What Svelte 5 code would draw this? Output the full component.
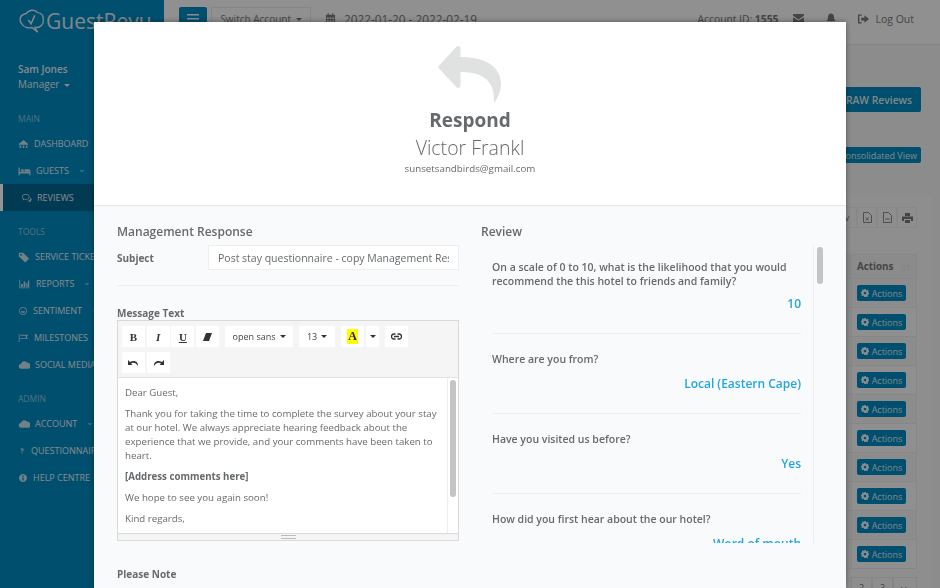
<script>
	const nav = [
		{ head: 'MAIN', items: [
			{ label: 'DASHBOARD', icon: 'bank', w: 11 },
			{ label: 'GUESTS', icon: 'bed', w: 13, more: true },
			{ label: 'REVIEWS', icon: 'chat', w: 11, active: true }
		] },
		{ head: 'TOOLS', items: [
			{ label: 'SERVICE TICKETS', icon: 'tag', w: 12 },
			{ label: 'REPORTS', icon: 'chart', w: 13, more: true },
			{ label: 'SENTIMENT', icon: 'smile', w: 10, more: true },
			{ label: 'MILESTONES', icon: 'flag', w: 11 },
			{ label: 'SOCIAL MEDIA', icon: 'cloud', w: 12 }
		] },
		{ head: 'ADMIN', items: [
			{ label: 'ACCOUNT', icon: 'cloud', w: 12, more: true },
			{ label: 'QUESTIONNAIRES', icon: 'help', w: 8 },
			{ label: 'HELP CENTRE', icon: 'info', w: 10 }
		] }
	];
	const icons = {
		bank: 'M1 7 7 2l6 5v1H1zM2 9h2v3H2zM6 9h2v3H6zM10 9h2v3h-2z',
		bed: 'M0 3h1.500v5H14v4h-1.500v-2h-11v2H0zM3 5h3v2.500H3zM7 5h5a2 2 0 0 1 2 2v.500H7z',
		chat: 'M6 2c2.800 0 5 1.600 5 3.600S8.800 9.200 6 9.200c-.6 0-1.200 0-1.700-.2L2 10.200l.6-2C1.600 7.500 1 6.600 1 5.600 1 3.600 3.200 2 6 2zm0 1C3.800 3 2 4.200 2 5.600c0 .8.600 1.500 1.700 2.100l-.2.800 1-.6c.5.200 1 .3 1.500.3 2.200 0 4-1.200 4-2.600S8.200 3 6 3zM12 6.500c1 .6 1.500 1.400 1.500 2.300 0 .8-.5 1.500-1.300 2l.4 1.500-1.900-1c-1.100.2-2.300 0-3.200-.5 2.600 0 5-1.800 4.500-4.300z',
		tag: 'M1 2h5l7 7-4.500 4.500-7.500-7zM3.500 3.500a1 1 0 1 0 .01 0z',
		chart: 'M1 2h1v9h11v1H1zM3 7h2v3.500H3zM6 4h2v6.500H6zM9 6h1.500v4.500H9zM11 3h1.500v7.500H11z',
		smile: 'M7 1.500a5.500 5.500 0 1 0 .01 0zm0 1a4.500 4.500 0 1 1-.01 0zM4 7.500h6c-.4 1.500-1.600 2.300-3 2.300S4.400 9 4 7.500z',
		flag: 'M1 2h1v10H1zM3 3h10l-2 2.500L13 8H3V7h7.500L9.500 5.500l1-1.500H3z',
		cloud: 'M4 11.500a3 3 0 0 1-.4-6 4 4 0 0 1 7.300-1 3.500 3.500 0 0 1 .1 7z',
		help: 'M4 5c0-1.700 1.300-3 3-3s3 1.200 3 2.700c0 2-2.300 2.200-2.300 3.800H6c0-2.500 2-2.600 2-3.800 0-.5-.4-.9-1-.9-.7 0-1 .5-1 1.200zM6 9.500h1.800v2H6z',
		info: 'M7 1.500a5.500 5.500 0 1 0 .01 0zM6 3.500h2v2H6zM6 6.500h2v4H6z'
	};
	const rows = Array.from({ length: 10 });
	const questions = [
		{ q: 'On a scale of 0 to 10, what is the likelihood that you would recommend the this hotel to friends and family?', a: '10' },
		{ q: 'Where are you from?', a: 'Local (Eastern Cape)' },
		{ q: 'Have you visited us before?', a: 'Yes' },
		{ q: 'How did you first hear about the our hotel?', a: 'Word of mouth' }
	];
</script>

<div class="page">
	<aside class="sidebar">
		<div class="brand">
			<svg width="28" height="28" viewBox="0 0 30 30" fill="none" stroke="#dfe8ec" stroke-width="1.500">
				<path d="M9 7c2-4 9-5 12-1 4 0 7 4 6 8 1 4-3 8-7 8l-2 0 3 5-6-5c-4 1-9 0-11-4-3-3-2-9 2-10 1-1 2-1 3-1z" />
				<path d="M11 14l3 4 4-9" stroke-width="1.700" />
			</svg>
			<span>GuestRevu</span>
		</div>
		<div class="user">
			<strong>Sam Jones</strong>
			<span>Manager <i class="caret"></i></span>
		</div>
		{#each nav as group}
			<div class="group">
				<h4>{group.head}</h4>
				{#each group.items as item}
					<div class="nav-item" class:active={item.active}>
						<svg width={item.w} height="12" viewBox="0 0 14 14" fill="currentColor"><path d={icons[item.icon]} /></svg>
						<span>{item.label}</span>
						{#if item.more}<small>⌄</small>{/if}
					</div>
				{/each}
			</div>
		{/each}
	</aside>

	<main class="main">
		<header class="topbar">
			<button class="burger" aria-label="Menu">
				<svg width="12" height="10" viewBox="0 0 12 10" fill="#eef4f7"><path d="M0 0h12v1.500H0zM0 4h12v1.500H0zM0 8h12v1.500H0z" /></svg>
			</button>
			<button class="switch">Switch Account <i class="caret"></i></button>
			<svg class="cal" width="11" height="11" viewBox="0 0 12 12" fill="#777"><path d="M1 2h2V0h1v2h4V0h1v2h2v10H1zM2 5v1.500h2V5zm3 0v1.500h2V5zm3 0v1.500h2V5zM2 8v1.500h2V8zm3 0v1.500h2V8zm3 0v1.500h2V8z" /></svg>
			<span class="dates">2022-01-20 - 2022-02-19</span>
			<span class="spacer"></span>
			<span class="account">Account ID: <b>1555</b></span>
			<svg width="11" height="9" viewBox="0 0 12 10" fill="#777"><path d="M0 0h12v2L6 6 0 2zM0 3.500 6 7.500l6-4V10H0z" /></svg>
			<svg class="bell" width="10" height="11" viewBox="0 0 12 12" fill="#777"><path d="M6 0c2.500 0 3.500 2 3.500 4 0 3 1 4 2 5H.5c1-1 2-2 2-5 0-2 1-4 3.500-4zM4.500 10h3a1.500 1.500 0 0 1-3 0z" /></svg>
			<svg class="exit" width="11" height="10" viewBox="0 0 12 10" fill="#777"><path d="M4 0v1.500H1.500v7H4V10H0V0zM7 1l5 4-5 4V6.500H3.500v-3H7z" /></svg>
			<span class="logout">Log Out</span>
		</header>

		<div class="raw-row"><button class="btn raw">RAW Reviews</button></div>
		<div class="view-row"><button class="btn view">Consolidated View</button></div>

		<section class="panel">
			<div class="tools">
				<span class="tool">v</span>
				<span class="tool"><svg width="9" height="11" viewBox="0 0 9 11" fill="none" stroke="#888"><path d="M.5.500h5l3 3v7h-8zM3 5.500l2.500 3M5.500 5.500l-2.500 3" /></svg></span>
				<span class="tool"><svg width="9" height="11" viewBox="0 0 9 11" fill="none" stroke="#888"><path d="M.5.500h5l3 3v7h-8zM2.500 7h4" /></svg></span>
				<span class="tool"><svg width="11" height="10" viewBox="0 0 11 10" fill="#777"><path d="M3 0h5v3H3zM0 3.500h11V8H9V6H2v2H0zM3 7h5v3H3z" /></svg></span>
			</div>
			<div class="table">
				<div class="tr head">
					<span class="prev"></span>
					<div class="th"><b>Actions</b><span>↓↑</span></div>
				</div>
				{#each rows as _}
					<div class="tr">
						<span class="prev"></span>
						<div class="td">
							<button class="btn act">
								<svg width="8" height="8" viewBox="0 0 8 8" fill="#eef4f7"><path d="M3.200 0h1.600l.2 1.100.7.300.9-.6 1.100 1.100-.6.900.3.700L8 3.700v1.600l-1.100.2-.3.700.6.900-1.100 1.100-.9-.6-.7.300L4.800 8H3.200L3 6.900l-.7-.3-.9.6L.3 6.100l.6-.9-.3-.7L0 4.300V2.700l1.100-.2.300-.7-.6-.9L1.900.3l.9.6.7-.3zM4 2.700a1.300 1.300 0 1 0 .01 0z" fill-rule="evenodd" /></svg>
								Actions
							</button>
						</div>
					</div>
				{/each}
			</div>
			<div class="pages"><span>2</span><span>3</span><span class="last">▸▸</span></div>
		</section>
	</main>
</div>

<div class="backdrop"></div>

<div class="modal">
	<div class="modal-head">
		<svg width="64" height="58" viewBox="0 0 64 58" fill="#e0e2e2">
			<path d="M1 20.500 18.500 1.800C20 .3 22.500 1 22.500 3.500V12C48 12 63 22 63 39c0 7-3 13-6 18-.4.500-1 .300-1-.300C57 38 47 27 22.500 27v13.500c0 2.500-2.500 3.200-4 1.700L1 23.500c-.8-.9-.8-2.100 0-3z" />
		</svg>
		<h2>Respond</h2>
		<h3>Victor Frankl</h3>
		<p>sunsetsandbirds@gmail.com</p>
	</div>
	<div class="modal-body">
		<div class="col">
			<h5>Management Response</h5>
			<div class="subject">
				<label for="subject">Subject</label>
				<input id="subject" value="Post stay questionnaire - copy Management Response" readonly />
			</div>
			<hr />
			<div class="msg-label">Message Text</div>
			<div class="editor">
				<div class="toolbar">
					<div class="tb-row">
						<div class="tb-group">
							<span class="tb b">B</span>
							<span class="tb it">I</span>
							<span class="tb u">U</span>
							<span class="tb"><svg width="9" height="8" viewBox="0 0 9 8" fill="#333"><path d="M3 0h6L6 8H0z" /></svg></span>
						</div>
						<span class="tb font">open sans <i class="caret dark"></i></span>
						<span class="tb size">13 <i class="caret dark"></i></span>
						<div class="tb-group">
							<span class="tb color"><em>A</em></span>
							<span class="tb narrow"><i class="caret dark"></i></span>
						</div>
						<span class="tb"><svg width="11" height="7" viewBox="0 0 11 7" fill="none" stroke="#333" stroke-width="1.300"><path d="M4.500 1H3a2.500 2.500 0 0 0 0 5h1.500M6.500 1H8a2.500 2.500 0 0 1 0 5H6.500M3 3.500h5" /></svg></span>
					</div>
					<div class="tb-row">
						<div class="tb-group">
							<span class="tb"><svg width="11" height="7" viewBox="0 0 11 7" fill="#333"><path d="M0 1v5h4.500L3 4.500C5 3 8 3.500 10 7c.5-3.500-3-6.500-8-4z" /></svg></span>
							<span class="tb"><svg width="11" height="7" viewBox="0 0 11 7" fill="#333"><path d="M11 1v5H6.500L8 4.500C6 3 3 3.500 1 7c-.5-3.500 3-6.500 8-4z" /></svg></span>
						</div>
					</div>
				</div>
				<div class="note-text">
					<div class="copy">
						<p>Dear Guest,</p>
						<p>Thank you for taking the time to complete the survey about your stay at our hotel. We always appreciate hearing feedback about the experience that we provide, and your comments have been taken to heart.</p>
						<p><b>[Address comments here]</b></p>
						<p>We hope to see you again soon!</p>
						<p>Kind regards,</p>
					</div>
					<div class="bar"><span></span></div>
				</div>
				<div class="grip"><span></span></div>
			</div>
			<div class="please">Please Note</div>
			<div class="fine">This email will be sent from <a href="#top">noreply@guestrevu.com</a></div>
		</div>
		<div class="col review">
			<h5>Review</h5>
			<div class="scroller">
				<div class="qs">
					{#each questions as item}
						<div class="q">
							<p>{item.q}</p>
							<div class="a">{item.a}</div>
						</div>
					{/each}
				</div>
				<div class="bar wide"><span></span></div>
			</div>
		</div>
	</div>
</div>

<style>
	:global(body) {
		margin: 0;
		overflow: hidden;
		font-family: 'Open Sans', sans-serif;
		background: #ececec;
	}
	button {
		font-family: inherit;
		border: 0;
	}
	.page {
		display: flex;
		height: 588px;
		width: 940px;
		overflow: hidden;
	}
	.sidebar {
		width: 164px;
		flex-shrink: 0;
		background: #0088c0;
		color: #e4edf1;
		overflow: hidden;
	}
	.brand {
		display: flex;
		align-items: center;
		padding: 0 0 0 18px;
		height: 41px;
		box-sizing: border-box;
		font-size: 21px;
		color: #dfe8ec;
	}
	.user {
		padding: 21px 0 0 18px;
		font-size: 10px;
		line-height: 15px;
		display: flex;
		flex-direction: column;
		height: 53px;
		box-sizing: border-box;
	}
	.user strong {
		font-weight: 600;
	}
	.group h4 {
		margin: 0 0 5px;
		padding: 0 0 0 18px;
		font-size: 8.500px;
		line-height: 12px;
		font-weight: 400;
		color: #8cc4dc;
	}
	.user + .group {
		margin-top: 19px;
	}
	.nav-item {
		display: flex;
		align-items: center;
		gap: 5px;
		height: 27px;
		padding-left: 18px;
		font-size: 9px;
		white-space: nowrap;
	}
	.nav-item svg {
		flex-shrink: 0;
		opacity: 0.85;
	}
	.nav-item small {
		font-size: 9px;
		margin: -4px 0 0 4px;
		opacity: 0.7;
	}
	.nav-item.active {
		background: #006590;
		border-left: 3px solid #fff;
		padding-left: 18px;
	}
	.group + .group {
		margin-top: 15px;
	}
	.caret {
		display: inline-block;
		width: 0;
		height: 0;
		border: 3px solid transparent;
		border-top-color: currentColor;
		border-bottom: 0;
		vertical-align: middle;
		margin-left: 2px;
	}
	.caret.dark {
		color: #333;
	}
	.main {
		flex: 1;
		min-width: 0;
		display: flex;
		flex-direction: column;
		background: #f2f2f2;
		color: #777;
	}
	.topbar {
		display: flex;
		align-items: center;
		height: 45px;
		flex-shrink: 0;
		box-sizing: border-box;
		border-bottom: 1px solid #e4e4e4;
		background: #f8f8f8;
		padding: 0 26px 7px 15px;
		font-size: 10.500px;
	}
	.burger {
		width: 28px;
		height: 24px;
		border-radius: 2px;
		background: #0088c0;
		margin-right: 4px;
		padding: 0;
	}
	.switch {
		width: 100px;
		height: 24px;
		background: #f8f8f8;
		border: 1px solid #e6e6e6;
		font-size: 10px;
		color: #777;
		margin-right: 14px;
		padding: 0;
	}
	.cal {
		margin-right: 8px;
	}
	.dates {
		font-size: 11.800px;
	}
	.spacer {
		flex: 1;
	}
	.account {
		font-size: 10.300px;
		margin-right: 15px;
	}
	.bell {
		margin: 0 22px;
	}
	.exit {
		margin-right: 6px;
	}
	.raw-row {
		display: flex;
		justify-content: flex-end;
		padding: 42px 19px 0 0;
		height: 67px;
		flex-shrink: 0;
		box-sizing: border-box;
	}
	.btn {
		background: #0088c0;
		color: #dfe8ec;
		border-radius: 2px;
	}
	.raw {
		height: 25px;
		width: 120px;
		font-size: 10.300px;
		font-weight: 600;
		text-align: right;
		padding: 0 9px;
	}
	.view-row {
		display: flex;
		justify-content: flex-end;
		padding: 0 19px 0 0;
		align-items: flex-start;
		height: 48px;
		flex-shrink: 0;
		margin-top: 35px;
	}
	.view {
		width: 110px;
		height: 16px;
		font-size: 9px;
		padding: 0 4px 0 0;
		text-align: right;
		white-space: nowrap;
	}
	.panel {
		flex: 1;
		min-height: 0;
		overflow: hidden;
		margin-right: 8px;
		background: #f5f5f5;
		padding: 12px 15px 0 0;
		display: flex;
		flex-direction: column;
		align-items: flex-end;
	}
	.tools {
		display: flex;
		flex-shrink: 0;
	}
	.tool {
		width: 20px;
		height: 21px;
		border: 1px solid #eaeaea;
		box-sizing: border-box;
		display: flex;
		align-items: center;
		justify-content: center;
		font-size: 9px;
	}
	.table {
		margin-top: 26px;
		flex-shrink: 0;
	}
	.tr {
		display: flex;
		height: 29px;
	}
	.tr.head {
		height: 25px;
	}
	.prev {
		width: 5px;
		background: #f3f3f3;
		border-bottom: 1px solid #e9e9e9;
	}
	.tr.head .prev {
		background: #ededed;
	}
	.th,
	.td {
		width: 66px;
		box-sizing: border-box;
		display: flex;
		align-items: center;
		padding-left: 5px;
		border: 1px solid #e9e9e9;
		border-top: 0;
	}
	.th {
		justify-content: space-between;
		padding-right: 6px;
		font-size: 9.800px;
		background: #f0f0f0;
		border-top: 1px solid #e9e9e9;
	}
	.th span {
		color: #d4d4d4;
		font-size: 8px;
	}
	.td {
		background: #f6f6f6;
	}
	.tr:nth-child(even) .td {
		background: #f2f2f2;
	}
	.act {
		width: 49px;
		height: 16px;
		font-size: 9px;
		padding: 0;
		display: flex;
		align-items: center;
		justify-content: center;
		gap: 3px;
	}
	.pages {
		display: flex;
		flex-shrink: 0;
		margin-top: 8px;
		font-size: 9px;
	}
	.pages span {
		width: 21px;
		height: 20px;
		border: 1px solid #e6e6e6;
		display: flex;
		align-items: center;
		justify-content: center;
		box-sizing: border-box;
	}
	.pages .last {
		width: 24px;
		font-size: 8px;
	}
	.backdrop {
		position: fixed;
		inset: 0;
		background: rgba(0, 0, 0, 0.42);
	}
	.modal {
		position: fixed;
		left: 94px;
		top: 22px;
		width: 752px;
		height: 566px;
		overflow: hidden;
		background: #f9fafc;
		box-shadow: 0 0 6px rgba(0, 0, 0, 0.4);
		color: #676a6c;
	}
	.modal-head {
		height: 184px;
		box-sizing: border-box;
		background: #fff;
		border-bottom: 1px solid #e5e6e7;
		text-align: center;
		padding-top: 23px;
		display: flex;
		flex-direction: column;
		align-items: center;
	}
	h2 {
		margin: 4px 0 0;
		font-size: 19px;
		line-height: 27px;
		font-weight: 700;
		color: #676a6c;
	}
	h3 {
		margin: 0;
		font-size: 19.500px;
		line-height: 27px;
		font-weight: 300;
	}
	.modal-head p {
		margin: 1px 0 0;
		font-size: 9.750px;
		line-height: 14px;
	}
	.modal-body {
		display: flex;
		gap: 22px;
		padding: 18px 23px 0;
	}
	.col {
		width: 342px;
		flex-shrink: 0;
	}
	h5 {
		margin: 0;
		font-size: 12px;
		line-height: 16px;
		font-weight: 600;
	}
	.subject {
		display: flex;
		align-items: center;
		margin-top: 5px;
	}
	.subject label {
		width: 91px;
		font-size: 10px;
		font-weight: 700;
	}
	input {
		flex: 1;
		min-width: 0;
		height: 25px;
		box-sizing: border-box;
		border: 1px solid #eceef0;
		background: #fff;
		font: 400 10.500px 'Open Sans', sans-serif;
		color: #676a6c;
		padding: 0 9px;
		outline: none;
	}
	hr {
		border: 0;
		border-top: 1px solid #eceef0;
		margin: 15px 0 0;
	}
	.msg-label {
		margin-top: 20px;
		font-size: 10px;
		line-height: 14px;
		font-weight: 700;
	}
	.editor {
		border: 1px solid #d9d9d9;
		box-sizing: border-box;
		height: 221px;
		display: flex;
		flex-direction: column;
		background: #f5f5f5;
	}
	.toolbar {
		height: 57px;
		flex-shrink: 0;
		box-sizing: border-box;
		padding: 5px 4px 0;
		border-bottom: 1px solid #e2e2e2;
		display: flex;
		flex-direction: column;
		gap: 5px;
	}
	.tb-row {
		display: flex;
		gap: 6px;
	}
	.tb-group {
		display: flex;
		gap: 1.700px;
	}
	.tb {
		width: 23px;
		height: 21px;
		background: #fff;
		display: flex;
		align-items: center;
		justify-content: center;
		font-size: 9px;
		color: #444;
		box-sizing: border-box;
		white-space: nowrap;
		gap: 2px;
	}
	.b {
		font: 700 11px 'Liberation Serif', serif;
		color: #333;
	}
	.it {
		font: italic 700 11px 'Liberation Serif', serif;
		color: #333;
	}
	.u {
		font: 700 11px 'Liberation Serif', serif;
		text-decoration: underline;
		color: #333;
	}
	.font {
		width: 68px;
	}
	.size {
		width: 36px;
	}
	.narrow {
		width: 13px;
	}
	.color em {
		font: 700 12px 'Liberation Serif', serif;
		background: #ffff00;
		color: #222;
		padding: 0 1px;
	}
	.note-text {
		display: flex;
		background: #fff;
		height: 155px;
		flex-shrink: 0;
		overflow: hidden;
	}
	.copy {
		flex: 1;
		min-width: 0;
		padding: 8px 4px 0 7px;
		font-size: 9.700px;
		line-height: 14px;
	}
	.copy p {
		margin: 0 0 7px;
	}
	.bar {
		width: 11px;
		flex-shrink: 0;
		border-left: 1px solid #eceef0;
		box-sizing: border-box;
		padding: 2px 2px 0 2px;
	}
	.bar span {
		display: block;
		width: 6px;
		height: 117px;
		border-radius: 3px;
		background: #c4c4c4;
	}
	.grip {
		flex: 1;
		background: #f5f5f5;
		border-top: 1px solid #d9d9d9;
		display: flex;
		align-items: center;
		justify-content: center;
	}
	.grip span {
		width: 15px;
		height: 4px;
		border-top: 1px solid #bbb;
		border-bottom: 1px solid #bbb;
		box-sizing: border-box;
	}
	.please {
		margin-top: 26px;
		font-size: 10px;
		line-height: 14px;
		font-weight: 700;
	}
	.fine {
		margin-top: 4px;
		font-size: 9.500px;
		line-height: 14px;
		white-space: nowrap;
	}
	.fine a {
		color: #2aa5dc;
		text-decoration: none;
	}
	.scroller {
		margin-top: 5px;
		height: 298px;
		display: flex;
		overflow: hidden;
	}
	.qs {
		width: 332px;
		flex-shrink: 0;
		box-sizing: border-box;
		padding: 0 12px 0 11px;
		margin-top: -3px;
	}
	.q {
		border-bottom: 1px solid #eceef0;
		padding: 18px 0 0;
	}
	.q p {
		margin: 0;
		font-size: 10.500px;
		line-height: 14px;
		font-weight: 600;
	}
	.a {
		text-align: right;
		font-size: 12px;
		line-height: 17px;
		font-weight: 600;
		color: #23a5de;
		margin: 9px 0 21px;
	}
	.q:first-child .a {
		margin-top: 7px;
	}
	.bar.wide {
		width: 11px;
		padding: 2px 2px 0 3px;
		border-left: 1px solid #eceef0;
		border-right: 1px solid #f1f2f4;
	}
	.bar.wide span {
		height: 37px;
	}
</style>
